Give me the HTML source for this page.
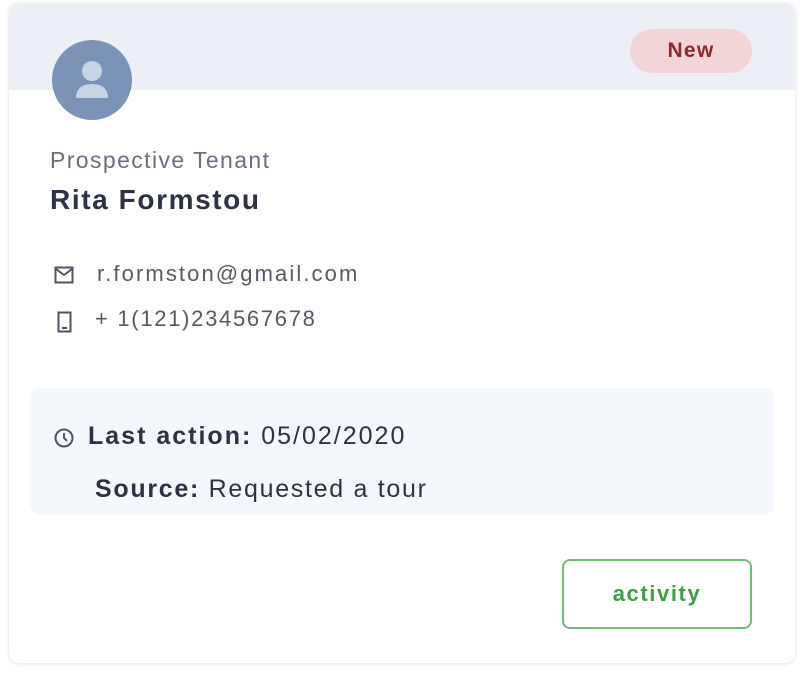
<!DOCTYPE html>
<html><head><style>
body{margin:0;width:804px;height:675px;background:#fff;font-family:"Liberation Sans",sans-serif;position:relative;overflow:hidden}
.card{position:absolute;left:9px;top:3px;width:786px;height:660px;border-radius:10px;background:#fff;box-shadow:0 1px 4px rgba(0,0,0,.12);overflow:hidden}
.hdr{position:absolute;left:0;top:0;width:100%;height:87px;background:#eceff5}
.av{position:absolute;left:43px;top:37px;width:80px;height:80px;border-radius:50%;background:#7b93b6}
.badge{position:absolute;left:621px;top:26px;width:122px;height:44px;border-radius:22px;background:#f2d5d7;color:#8a2b2e;font-weight:bold;font-size:21px;text-align:center;line-height:44px;letter-spacing:1.3px}
.t{position:absolute;white-space:nowrap}
.box{position:absolute;left:21px;top:385px;width:744px;height:127px;border-radius:10px;background:#f4f7fb}
.btn{position:absolute;left:553px;top:556px;width:186px;height:66px;border:2px solid #6cc072;border-radius:8px;color:#3f9f47;font-weight:bold;font-size:22px;text-align:center;line-height:66px;letter-spacing:1.6px}
</style></head><body>
<div class="card">
<div class="hdr"></div>
<div class="av"><svg width="80" height="80" viewBox="0 0 80 80"><circle cx="40" cy="31" r="10" fill="#c8d3e3"/><path d="M24 58c0-10 7-14 16-14s16 4 16 14z" fill="#c8d3e3"/></svg></div>
<div class="badge">New</div>
<div class="t" style="left:41px;top:144px;font-size:23px;letter-spacing:1.4px;color:#6b7080">Prospective Tenant</div>
<div class="t" style="left:41px;top:181px;font-size:28px;letter-spacing:1.6px;font-weight:bold;color:#2e3244">Rita Formstou</div>
<svg class="t" style="left:45px;top:263px" width="20" height="18" viewBox="0 0 20 18"><rect x="1.5" y="1.5" width="17" height="15" fill="none" stroke="#505566" stroke-width="2"/><path d="M2 3l8 6 8-6" fill="none" stroke="#505566" stroke-width="2"/></svg>
<div class="t" style="left:88px;top:258px;font-size:22px;letter-spacing:2.1px;color:#555a68">r.formston@gmail.com</div>
<svg class="t" style="left:48px;top:308px" width="15" height="22" viewBox="0 0 15 22"><rect x="1.5" y="1.5" width="12" height="19" fill="none" stroke="#505566" stroke-width="2"/><path d="M5 17h5" stroke="#505566" stroke-width="2"/></svg>
<div class="t" style="left:86px;top:303px;font-size:22px;letter-spacing:1.7px;color:#555a68">+ 1(121)234567678</div>
<div class="box"></div>
<svg class="t" style="left:44px;top:424px" width="22" height="22" viewBox="0 0 22 22"><circle cx="11" cy="11" r="8.5" fill="none" stroke="#505566" stroke-width="2"/><path d="M11 6v5l3 3" fill="none" stroke="#505566" stroke-width="2"/></svg>
<div class="t" style="left:79px;top:419px;font-size:25px;letter-spacing:2px;color:#2e3244"><b>Last action:</b> 05/02/2020</div>
<div class="t" style="left:86px;top:472px;font-size:25px;letter-spacing:1.7px;color:#2e3244"><b>Source:</b> Requested a tour</div>
<div class="btn">activity</div>
</div>
</body></html>
